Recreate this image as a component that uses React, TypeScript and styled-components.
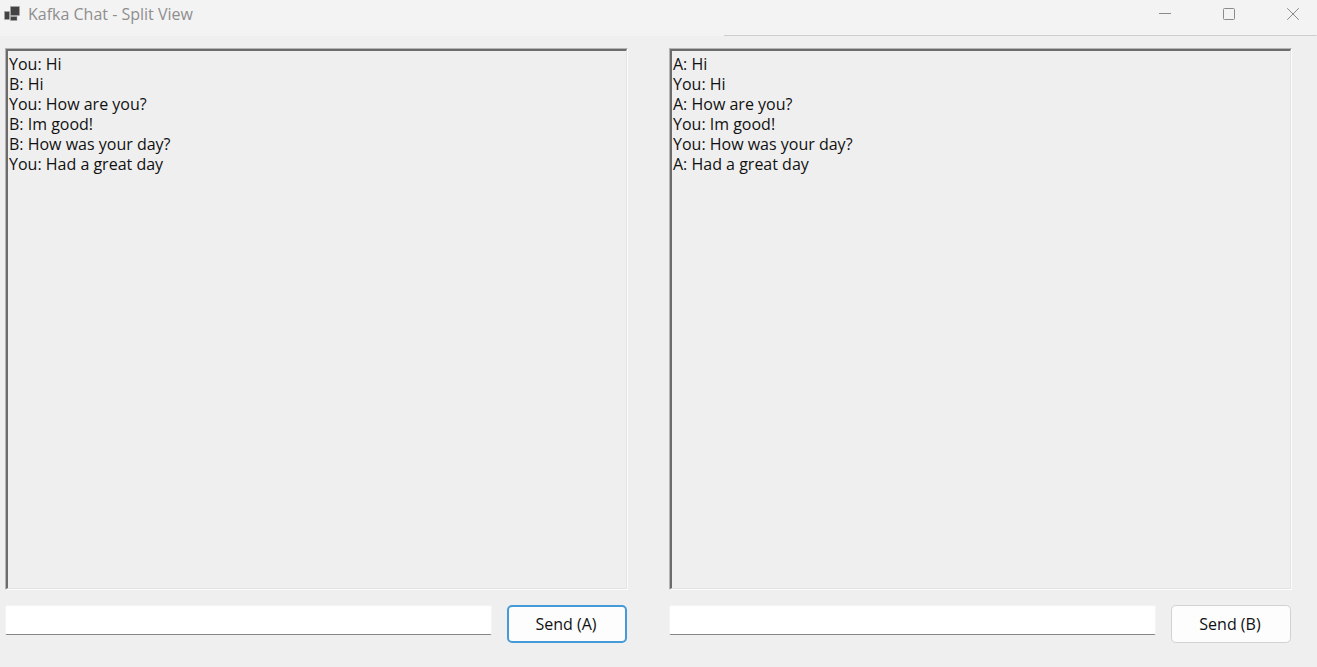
import React, { useState } from 'react';
import styled, { createGlobalStyle } from 'styled-components';

const GlobalStyle = createGlobalStyle`
  *, *::before, *::after { box-sizing: border-box; }
  body {
    margin: 0;
    background: #efefef;
    color: #111;
    font-family: 'Segoe UI', 'Open Sans', 'Noto Sans', sans-serif;
    font-size: 16px;
    line-height: 20px;
  }
`;

const Window = styled.div`
  display: flex;
  flex-direction: column;
  min-height: 100vh;
`;

const TitleBar = styled.header`
  display: flex;
  align-items: flex-start;
  height: 36px;
  padding-left: 4px;
  background: linear-gradient(#cdcdcd, #cdcdcd) right bottom / 45% 1px no-repeat, #f3f3f3;
`;

const AppIcon = styled.svg`
  flex: none;
  width: 16px;
  height: 16px;
  margin: 6px 8px 0 0;
`;

const Title = styled.h1`
  flex: 1;
  margin: 4px 0 0;
  color: #8e8e8e;
  font-size: 16px;
  font-weight: 400;
  line-height: 20px;
`;

const WindowButtons = styled.div`
  display: flex;
  gap: 16px;
`;

const WindowButton = styled.button`
  display: flex;
  align-items: center;
  justify-content: center;
  width: 48px;
  height: 28px;
  padding: 0;
  border: 0;
  background: transparent;
  color: #8a8a8a;
`;

const Split = styled.main`
  flex: 1;
  display: grid;
  grid-template-columns: 1fr 1fr;
  gap: 41px;
  padding: 12px 25px 24px 5px;
`;

const Pane = styled.section`
  display: flex;
  flex-direction: column;
  gap: 15px;
  min-width: 0;
`;

const Log = styled.div`
  flex: 1;
  border: 1px solid;
  border-color: #b4b4b4 #fbfbfb #fbfbfb #b4b4b4;
`;

const Messages = styled.ul`
  height: 100%;
  margin: 0;
  padding: 3px 1px;
  border: 2px solid;
  border-color: #6c6c6c #e4e4e4 #e4e4e4 #6c6c6c;
  border-width: 2px 1px 1px 2px;
  list-style: none;
`;

const Composer = styled.form`
  display: flex;
  align-items: flex-start;
  gap: 15px;
  padding-right: 1px;
`;

const MessageInput = styled.input`
  flex: 1;
  min-width: 0;
  height: 30px;
  padding: 2px 4px;
  border: 1px solid #f4f4f4;
  border-bottom-color: #868686;
  border-radius: 2px;
  background: #fff;
  font: inherit;
  outline: none;
`;

const SendButton = styled.button<{ $primary?: boolean }>`
  width: 120px;
  height: 38px;
  padding: 0 2px 1px 0;
  border: ${(p) => (p.$primary ? '2px solid #459ada' : '1px solid #d2d2d2')};
  border-radius: 5px;
  background: #fdfdfd;
  color: #111;
  font: inherit;
`;

interface ChatPaneProps {
  name: string;
  initial: string[];
  primary?: boolean;
}

function ChatPane({ name, initial, primary }: ChatPaneProps) {
  const [messages, setMessages] = useState(initial);
  const [draft, setDraft] = useState('');

  const send = (e: React.FormEvent) => {
    e.preventDefault();
    if (!draft.trim()) return;
    setMessages([...messages, `You: ${draft}`]);
    setDraft('');
  };

  return (
    <Pane>
      <Log>
        <Messages role="log">
          {messages.map((m, i) => (
            <li key={i}>{m}</li>
          ))}
        </Messages>
      </Log>
      <Composer onSubmit={send}>
        <MessageInput
          type="text"
          aria-label={`Message (${name})`}
          value={draft}
          onChange={(e) => setDraft(e.target.value)}
        />
        <SendButton type="submit" $primary={primary}>
          Send ({name})
        </SendButton>
      </Composer>
    </Pane>
  );
}

const LOG_A = [
  'You: Hi',
  'B: Hi',
  'You: How are you?',
  'B: Im good!',
  'B: How was your day?',
  'You: Had a great day',
];

const LOG_B = [
  'A: Hi',
  'You: Hi',
  'A: How are you?',
  'You: Im good!',
  'You: How was your day?',
  'A: Had a great day',
];

export default function App() {
  return (
    <Window>
      <GlobalStyle />
      <TitleBar>
        <AppIcon viewBox="0 0 16 16" aria-hidden="true">
          <g fill="#434343" stroke="#a8a8a8" strokeWidth="0.5">
            <rect x="6.5" y="0.5" width="9" height="9" />
            <rect x="0.5" y="5.5" width="5" height="8" />
            <rect x="6.5" y="10.5" width="6.5" height="4" />
          </g>
        </AppIcon>
        <Title>Kafka Chat - Split View</Title>
        <WindowButtons>
          <WindowButton type="button" aria-label="Minimize">
            <svg width="12" height="12" viewBox="0 0 12 12">
              <path d="M0 5.5h12" stroke="currentColor" />
            </svg>
          </WindowButton>
          <WindowButton type="button" aria-label="Maximize">
            <svg width="12" height="12" viewBox="0 0 12 12" fill="none">
              <rect x="0.5" y="0.5" width="11" height="11" rx="1" stroke="currentColor" />
            </svg>
          </WindowButton>
          <WindowButton type="button" aria-label="Close">
            <svg width="12" height="12" viewBox="0 0 12 12">
              <path d="M0.2 0.2l11.6 11.6M11.8 0.2L0.2 11.8" stroke="currentColor" />
            </svg>
          </WindowButton>
        </WindowButtons>
      </TitleBar>
      <Split>
        <ChatPane name="A" initial={LOG_A} primary />
        <ChatPane name="B" initial={LOG_B} />
      </Split>
    </Window>
  );
}
